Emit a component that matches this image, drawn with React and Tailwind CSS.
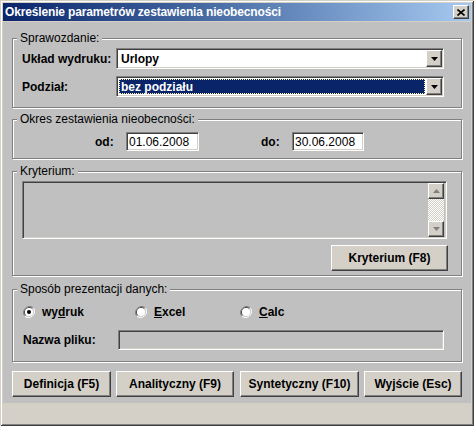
import React from 'react';

const sunken =
  'border border-t-[#808080] border-l-[#808080] border-b-white border-r-white shadow-[inset_1px_1px_0_#404040,inset_-1px_-1px_0_#d4d0c8] p-[1px]';
const raised =
  'bg-[#d4d0c8] border border-t-white border-l-white border-b-[#404040] border-r-[#404040] shadow-[inset_-1px_-1px_0_#808080]';

function Group({ title, className = '', children }) {
  return (
    <div className={`relative border border-[#808080] shadow-[inset_1px_1px_0_#fff,1px_1px_0_#fff] ${className}`}>
      <span className="absolute left-[4px] -top-[8px] bg-[#c0c0c0] px-[3px] leading-[14px]">{title}</span>
      {children}
    </div>
  );
}

function Arrow({ up = false, color = '#000' }) {
  return (
    <svg width="7" height="4" viewBox="0 0 7 4">
      <path d={up ? 'M3.5 0 L7 4 L0 4 Z' : 'M0 0 L7 0 L3.5 4 Z'} fill={color} />
    </svg>
  );
}

function Combo({ value, selected }) {
  return (
    <div className={`w-[328px] h-[21px] bg-white flex ${sunken}`}>
      {selected ? (
        <div className="flex-1 m-[1px] bg-[#0a246a] border border-dotted border-[#fff3b0] flex items-center pl-[1px] text-white font-bold">
          {value}
        </div>
      ) : (
        <div className="flex-1 flex items-center pl-[3px] font-bold">{value}</div>
      )}
      <div className={`w-[16px] h-[17px] flex items-center justify-center ${raised}`}>
        <Arrow />
      </div>
    </div>
  );
}

function Radio({ checked, children }) {
  return (
    <div className="flex items-center gap-[7px]">
      <svg width="12" height="12" viewBox="0 0 12 12">
        <path d="M10.2 1.8 A6 6 0 0 0 1.8 10.2" fill="none" stroke="#808080" strokeWidth="1" />
        <path d="M1.8 10.2 A6 6 0 0 0 10.2 1.8" fill="none" stroke="#fff" strokeWidth="1" />
        <path d="M9.5 2.5 A5 5 0 0 0 2.5 9.5" fill="none" stroke="#404040" strokeWidth="1" />
        <path d="M2.5 9.5 A5 5 0 0 0 9.5 2.5" fill="none" stroke="#d4d0c8" strokeWidth="1" />
        <circle cx="6" cy="6" r="4" fill="#fff" />
        {checked && <circle cx="6" cy="6" r="2" fill="#000" />}
      </svg>
      <span className="font-bold">{children}</span>
    </div>
  );
}

function Button({ className = '', children }) {
  return (
    <button className={`h-[26px] flex items-center justify-center font-bold ${raised} ${className}`}>
      {children}
    </button>
  );
}

export default function App() {
  return (
    <div
      className="w-[474px] h-[426px] bg-[#d4d0c8] p-[3px] flex flex-col text-[12px] text-black shadow-[inset_1px_1px_0_#d4d0c8,inset_-1px_-1px_0_#404040,inset_2px_2px_0_#fff,inset_-2px_-2px_0_#808080]"
      style={{ fontFamily: '"Liberation Sans", Arial, sans-serif' }}
    >
      {/* title bar */}
      <div className="h-[18px] bg-gradient-to-r from-[#0a246a] to-[#a6caf0] flex items-center justify-between pl-[2px] pr-[2px]">
        <span className="text-white font-bold text-[12px] leading-none tracking-[-0.15px]">
          Określenie parametrów zestawienia nieobecności
        </span>
        <div className={`w-[16px] h-[14px] flex items-center justify-center ${raised}`}>
          <svg width="8" height="7" viewBox="0 0 8 7">
            <path d="M0.5 0.5 L7.5 6.5 M7.5 0.5 L0.5 6.5" stroke="#000" strokeWidth="1.6" />
          </svg>
        </div>
      </div>

      <div className="mt-[1px] h-[381px] bg-[#c0c0c0] px-[9px] pt-[16px] flex flex-col">
        {/* Sprawozdanie */}
        <Group title="Sprawozdanie:" className="h-[70px] pt-[9px]">
          <div className="flex items-center h-[21px] pl-[9px]">
            <span className="w-[94px] font-bold">Układ wydruku:</span>
            <Combo value="Urlopy" />
          </div>
          <div className="flex items-center h-[21px] mt-[7px] pl-[9px]">
            <span className="w-[94px] font-bold">Podział:</span>
            <Combo value="bez podziału" selected />
          </div>
        </Group>

        {/* Okres */}
        <Group title="Okres zestawienia nieobecności:" className="h-[40px] mt-[11px] pt-[12px]">
          <div className="flex items-center h-[19px] pl-[82px]">
            <span className="w-[31px] font-bold">od:</span>
            <div className={`w-[73px] h-[19px] bg-white flex items-center pl-[2px] ${sunken}`}>01.06.2008</div>
            <span className="w-[31px] ml-[62px] font-bold">do:</span>
            <div className={`w-[72px] h-[19px] bg-white flex items-center pl-[2px] ${sunken}`}>30.06.2008</div>
          </div>
        </Group>

        {/* Kryterium */}
        <Group title="Kryterium:" className="h-[105px] mt-[12px] pt-[9px] pl-[9px] pr-[13px] flex flex-col">
          <div className={`w-[425px] h-[58px] bg-[#c0c0c0] flex justify-end ${sunken}`}>
            <div className="w-[16px] mr-[1px] flex flex-col">
              <div className={`h-[16px] flex items-center justify-center ${raised}`}>
                <Arrow up color="#808080" />
              </div>
              <div className="flex-1 bg-[repeating-conic-gradient(#fff_0_25%,#d4d0c8_0_50%)] bg-[length:2px_2px]" />
              <div className={`h-[16px] flex items-center justify-center ${raised}`}>
                <Arrow color="#808080" />
              </div>
            </div>
          </div>
          <Button className="w-[117px] h-[25px] mt-[6px] self-end">Kryterium (F8)</Button>
        </Group>

        {/* Sposób prezentacji */}
        <Group title="Sposób prezentacji danych:" className="h-[73px] mt-[13px] pt-[15px]">
          <div className="flex items-center h-[14px] pl-[10px]">
            <div className="w-[112px]">
              <Radio checked>
                wy<span className="underline">d</span>ruk
              </Radio>
            </div>
            <div className="w-[105px]">
              <Radio>
                <span className="underline">E</span>xcel
              </Radio>
            </div>
            <Radio>
              <span className="underline">C</span>alc
            </Radio>
          </div>
          <div className="flex items-center mt-[11px] pl-[10px]">
            <span className="w-[95px] font-bold">Nazwa pliku:</span>
            <div className={`w-[326px] h-[20px] bg-[#c0c0c0] ${sunken}`} />
          </div>
        </Group>

        {/* buttons */}
        <div className="flex mt-[9px]">
          <Button className="w-[99px]">Definicja (F5)</Button>
          <Button className="w-[118px] ml-[5px]">Analityczny (F9)</Button>
          <Button className="w-[119px] ml-[6px]">Syntetyczny (F10)</Button>
          <Button className="w-[98px] ml-[5px]">Wyjście (Esc)</Button>
        </div>
      </div>

      <div className="flex-1" />
    </div>
  );
}
